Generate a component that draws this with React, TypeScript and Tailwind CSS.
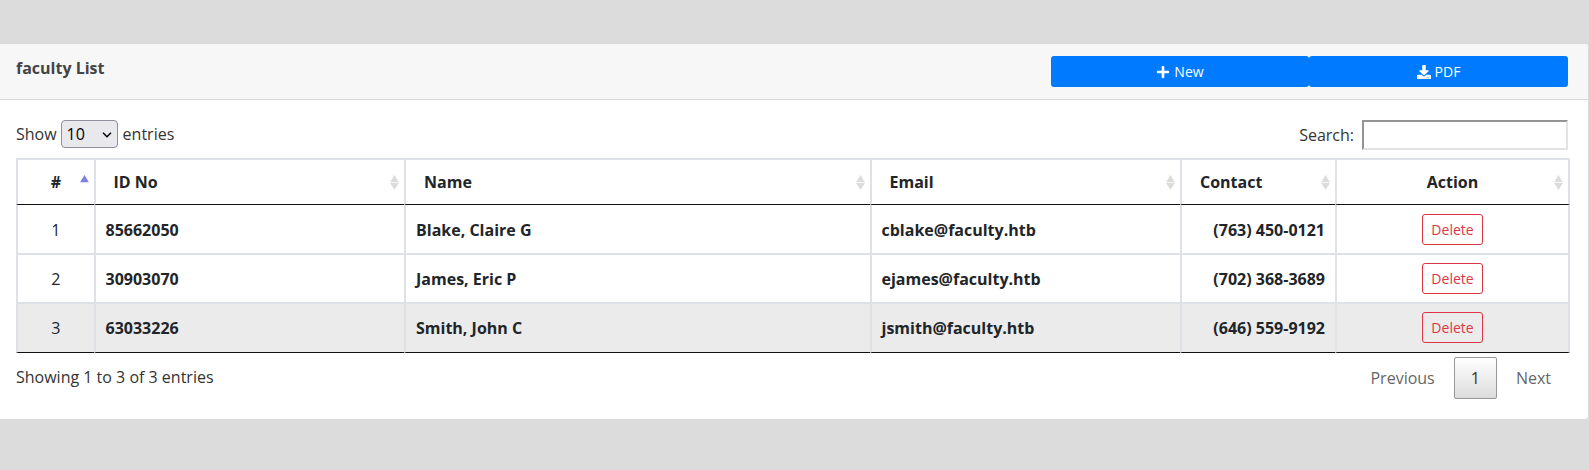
import { FaPlus, FaDownload } from "react-icons/fa";

const rows = [
  { n: 1, id: "85662050", name: "Blake, Claire G", email: "cblake@faculty.htb", contact: "(763) 450-0121" },
  { n: 2, id: "30903070", name: "James, Eric P", email: "ejames@faculty.htb", contact: "(702) 368-3689" },
  { n: 3, id: "63033226", name: "Smith, John C", email: "jsmith@faculty.htb", contact: "(646) 559-9192" },
];

const columns = [
  { label: "#", align: "justify-center", sorted: true },
  { label: "ID No", align: "justify-start pl-[17.5px]" },
  { label: "Name", align: "justify-start pl-[18px]" },
  { label: "Email", align: "justify-start pl-[17.5px]" },
  { label: "Contact", align: "justify-start pl-[18px]" },
  { label: "Action", align: "justify-center" },
];

function SortIcon({ sorted }: { sorted?: boolean }) {
  return (
    <svg className="absolute top-[15px] right-[5px]" width="9" height="15" viewBox="0 0 9 15">
      <path d="M4.5 0 8.9 7.2H.1z" fill={sorted ? "#7f7fe0" : "#dcdcdc"} />
      {!sorted && <path d="M.1 7.9h8.8L4.5 15z" fill="#dcdcdc" />}
    </svg>
  );
}

export default function App() {
  return (
    <div className="h-[470px] overflow-hidden bg-[#dcdcdc] pt-[43px] font-['Open_Sans',sans-serif] text-base leading-6 text-[#212529]">
      <div className="h-[377px] rounded-r-[4px] border-y border-r border-[#d9d9d9] bg-white">
        <header className="flex h-[56px] justify-between rounded-tr-[3px] border-b border-[#d9d9d9] bg-[#f7f7f7] pt-3 pr-5 pl-4">
          <b className="font-bold text-[#454545]">faculty List</b>
          <div className="flex h-[31px] text-sm text-white">
            <button className="flex w-[258px] items-center justify-center gap-1 rounded-[3px] bg-[#007bff]">
              <FaPlus size={14} />
              New
            </button>
            <button className="flex w-[259px] items-center justify-center gap-1 rounded-[3px] bg-[#007bff]">
              <FaDownload size={14} />
              PDF
            </button>
          </div>
        </header>

        <div className="flex h-[58px] items-start justify-between pt-5 pr-5 pl-4 text-[#333]">
          <label className="flex items-center">
            Show
            <span className="relative mr-[5px] ml-1 block">
              <select className="block h-7 w-[57px] appearance-none rounded-[4px] border border-[#8f8f9d] bg-[#e9e9ed] pl-[5px] leading-6 text-black">
                <option>10</option>
              </select>
              <svg className="absolute top-[12px] right-[6px]" width="10" height="6" viewBox="0 0 10 6" fill="none" stroke="#000" strokeWidth="1.5">
                <path d="m1 .7 4 4 4-4" />
              </svg>
            </span>
            entries
          </label>
          <label className="flex items-center">
            Search:
            <input className="ml-2 h-[30px] w-[206px] border-2 border-t-[#949494] border-r-[#e3e3e3] border-b-[#e3e3e3] border-l-[#949494] bg-white" />
          </label>
        </div>

        <table className="ml-4 w-[1554px] table-fixed border-separate border-spacing-0 font-bold">
          <colgroup>
            <col className="w-[78px]" />
            <col className="w-[310px]" />
            <col className="w-[466px]" />
            <col className="w-[310px]" />
            <col className="w-[155px]" />
            <col className="w-[235px]" />
          </colgroup>
          <thead>
            <tr>
              {columns.map((c) => (
                <th
                  key={c.label}
                  className="h-[47px] border-t-2 border-b border-l-2 border-t-[#dee2e6] border-b-[#111] border-l-[#dee2e6] p-0 last:border-r-2 last:border-r-[#dee2e6]"
                >
                  <div className={`relative flex h-11 items-center ${c.align}`}>
                    {c.label}
                    <SortIcon sorted={c.sorted} />
                  </div>
                </th>
              ))}
            </tr>
          </thead>
          <tbody className="[&_td]:border-b-2 [&_td]:border-l-2 [&_td]:border-[#dee2e6] [&_td]:p-0 [&_td]:pr-2.5 [&_td]:pl-[9.5px] [&_td:last-child]:border-r-2 [&_td:last-child]:pl-2.5 [&_td:nth-child(3)]:pl-2.5 [&_tr:first-child_td]:h-[50px] [&_tr:first-child_td]:pt-px [&_tr:last-child_td]:border-b [&_tr:last-child_td]:border-b-[#111] [&_tr:last-child_td]:bg-[#ebebeb] [&_tr:last-child_td]:pb-px">
            {rows.map((r) => (
              <tr key={r.n} className="h-[49px]">
                <td className="text-center font-normal">{r.n}</td>
                <td>{r.id}</td>
                <td>{r.name}</td>
                <td>{r.email}</td>
                <td className="text-right">{r.contact}</td>
                <td className="text-center">
                  <button className="mx-auto block h-[31px] w-[61px] rounded-[3px] border border-[#dc3545] text-sm leading-[21px] font-normal text-[#dc3545]">
                    Delete
                  </button>
                </td>
              </tr>
            ))}
          </tbody>
        </table>

        <footer className="flex items-start justify-between pt-1 pr-5 pl-4 text-[#333]">
          <div className="pt-2">Showing 1 to 3 of 3 entries</div>
          <nav className="flex gap-[2px]">
            <button className="border border-transparent px-4 py-2 text-[#666]">Previous</button>
            <button className="rounded-[2px] border border-[#979797] bg-linear-to-b from-white to-[#dcdcdc] px-4 py-2 text-[#333]">1</button>
            <button className="border border-transparent px-4 py-2 text-[#666]">Next</button>
          </nav>
        </footer>
      </div>
    </div>
  );
}
